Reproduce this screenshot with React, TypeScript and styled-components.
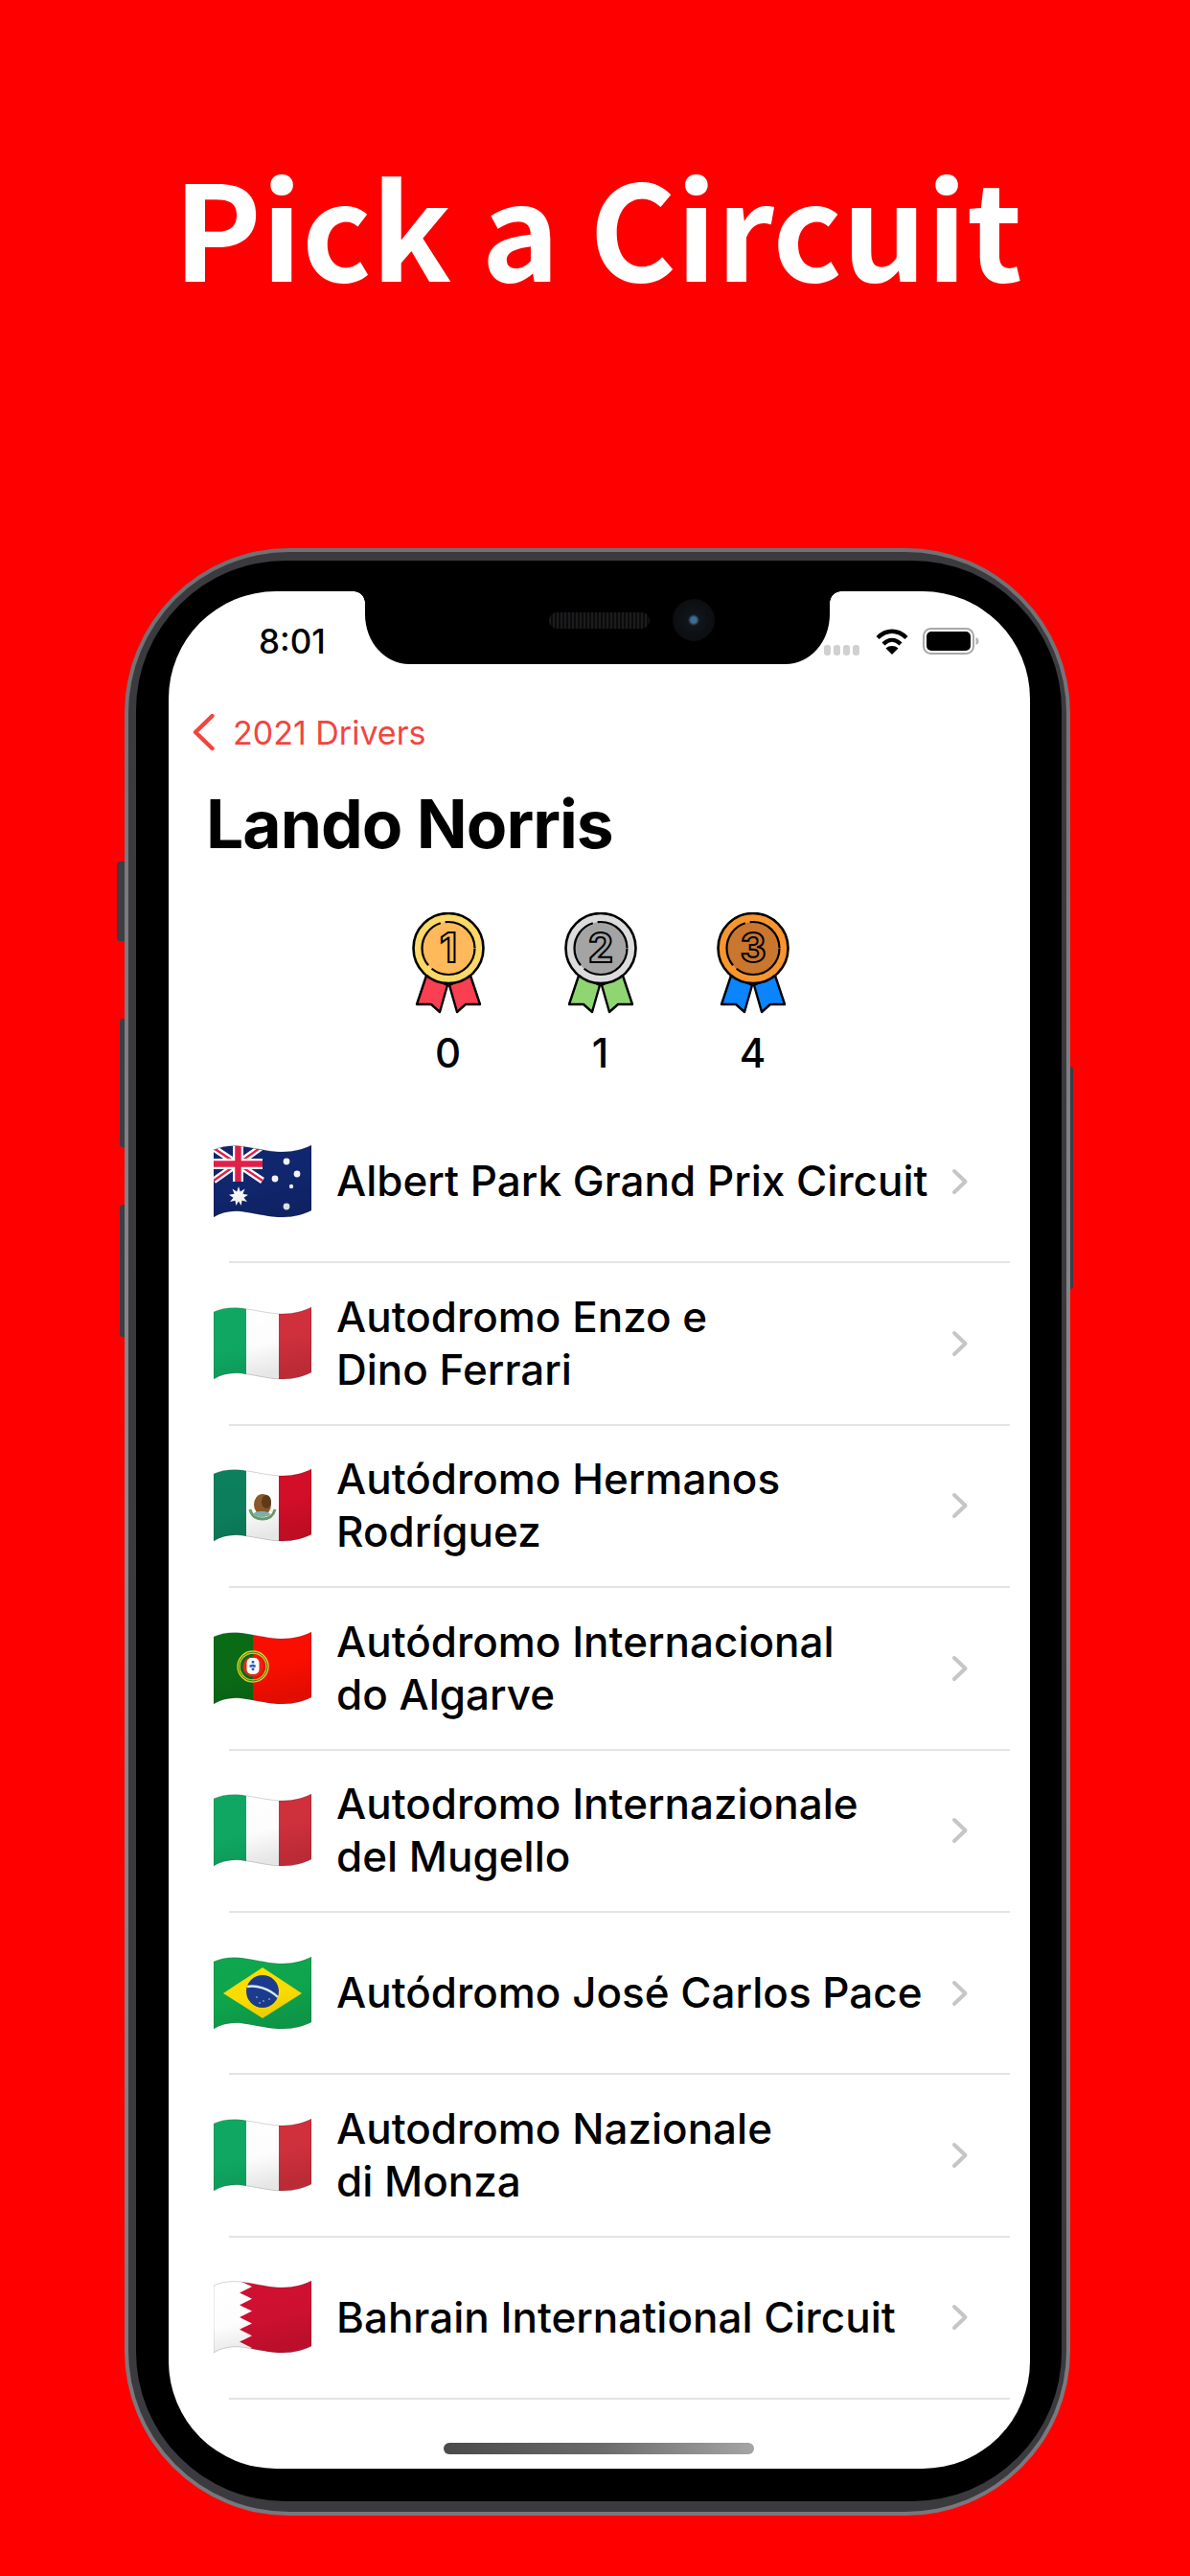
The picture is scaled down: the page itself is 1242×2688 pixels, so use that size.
import React from "react";
import styled, { createGlobalStyle } from "styled-components";

const Global = createGlobalStyle`
  html, body { margin: 0; padding: 0; background: #ff0000; }
  #root { width: 1242px; height: 2688px; overflow: hidden; }
`;

const Page = styled.div`
  width: 1242px;
  height: 2688px;
  background: #ff0000;
  display: flex;
  flex-direction: column;
  overflow: hidden;
  box-sizing: border-box;
`;

const Headline = styled.h1`
  margin: 0;
  height: 572px;
  padding: 134px 0 0 6px;
  box-sizing: border-box;
  text-align: center;
  color: #fff;
  font-family: "Noto Sans CJK JP", "Noto Sans", sans-serif;
  font-weight: 700;
  font-size: 138px;
  line-height: 200px;
`;

const Phone = styled.div`
  position: relative;
  margin-left: 130px;
  width: 987px;
  height: 2053px;
  box-sizing: border-box;
  padding: 4px;
  border-radius: 172px;
  background: linear-gradient(180deg, #707075, #8a8a8f 50%, #77777c);
`;

const Rim = styled.div`
  height: 100%;
  box-sizing: border-box;
  padding: 9px 5px 11px 8px;
  border-radius: 168px;
  background: #3a3a3f;
`;

const Bezel = styled.div`
  height: 100%;
  box-sizing: border-box;
  padding: 32px 33px 34px 34px;
  border-radius: 156px;
  background: #000;
`;

const SideButton = styled.span<{ $side: "left" | "right"; $top: number; $height: number; $width: number }>`
  position: absolute;
  top: ${(p) => p.$top}px;
  height: ${(p) => p.$height}px;
  width: ${(p) => p.$width}px;
  ${(p) => (p.$side === "left" ? `left: -${p.$width}px;` : `right: -${p.$width}px;`)}
  background: #3d3d43;
  border-radius: ${(p) => (p.$side === "left" ? "3px 0 0 3px" : "0 3px 3px 0")};
`;

const Screen = styled.div`
  position: relative;
  height: 100%;
  background: #fff;
  border-radius: 112px;
  overflow: hidden;
  display: flex;
  flex-direction: column;
  font-family: Inter, "Liberation Sans", sans-serif;
  color: #000;
`;

const Notch = styled.div`
  position: absolute;
  top: 0;
  left: 205px;
  width: 485px;
  height: 76px;
  background: #000;
  border-radius: 0 0 46px 46px / 0 0 52px 52px;
  &::before, &::after {
    content: "";
    position: absolute;
    top: 0;
    width: 12px;
    height: 12px;
  }
  &::before {
    left: -12px;
    background: radial-gradient(circle at 0 100%, transparent 11.5px, #000 12px);
  }
  &::after {
    right: -12px;
    background: radial-gradient(circle at 100% 100%, transparent 11.5px, #000 12px);
  }
`;

const Speaker = styled.span`
  position: absolute;
  left: 192px;
  top: 22px;
  width: 105px;
  height: 17px;
  border-radius: 9px;
  background: repeating-linear-gradient(90deg, #1c1c1e 0 2px, #0b0b0c 2px 4px);
`;

const Camera = styled.span`
  position: absolute;
  left: 321px;
  top: 8px;
  width: 44px;
  height: 44px;
  border-radius: 50%;
  background: radial-gradient(circle at 50% 50%, #3f6d8f 0 3px, #10161b 6px, #0c0d0f 70%);
`;

const StatusBar = styled.div`
  height: 70px;
  padding: 17px 52px 0 94px;
  display: flex;
  justify-content: space-between;
  align-items: center;
  flex-shrink: 0;
`;

const Clock = styled.span`
  font-size: 35px;
  font-weight: 500;
  line-height: 50px;
`;

const StatusIcons = styled.div`
  display: flex;
  align-items: center;
`;

const SignalDots = styled.div`
  display: flex;
  gap: 3px;
  margin-right: 17px;
  margin-top: 18px;
`;

const SignalDot = styled.span`
  width: 7px;
  height: 11px;
  border-radius: 3px;
  background: #d0d0d2;
`;

const BatteryIcon = styled.svg`
  margin-left: 15px;
`;

const BackRow = styled.div`
  display: flex;
  align-items: center;
  gap: 18px;
  margin-top: 38px;
  padding-left: 24px;
  height: 44px;
  color: #f2453f;
  font-size: 34px;
  flex-shrink: 0;
`;

const Name = styled.h2`
  margin: 33px 0 0 39px;
  font-size: 69.5px;
  line-height: 82px;
  font-weight: 700;
  letter-spacing: -1px;
`;

const MedalRow = styled.div`
  margin-top: 51px;
  display: flex;
  justify-content: center;
  gap: 79px;
  padding-left: 2px;
`;

const MedalCell = styled.div`
  width: 80px;
  display: flex;
  flex-direction: column;
  align-items: center;
`;

const MedalIcon = styled.svg`
  display: block;
  width: 80px;
  height: 108px;
`;

const MedalCount = styled.span`
  margin-top: 14px;
  font-size: 42px;
  line-height: 50px;
  font-weight: 500;
`;

const List = styled.div`
  margin-top: 25px;
  display: flex;
  flex-direction: column;
`;

const Row = styled.div`
  height: 167.4px;
  box-sizing: border-box;
  display: flex;
  align-items: center;
  padding: 0 63px 0 47px;
`;

const FlagIcon = styled.svg`
  display: block;
  width: 102px;
  height: 76px;
  flex-shrink: 0;
`;

const RowName = styled.span`
  flex: 1;
  margin-left: 26px;
  font-size: 44px;
  line-height: 55px;
  font-weight: 500;
`;

const Separator = styled.div`
  height: 2px;
  margin: 0 21px 0 63px;
  background: #e4e4e6;
`;

const HomeBar = styled.div`
  position: absolute;
  left: 287px;
  bottom: 15px;
  width: 324px;
  height: 12px;
  border-radius: 6px;
  background: linear-gradient(90deg, #4a4a4a, #6a6a6a 50%, #a5a5a5);
`;

const WAVE = "M0 5C8 1 18 0 28 1C45 3 58 7 72 7C84 7 94 4 102 0V68C94 72 84 75 72 75C58 75 45 71 28 69C18 68 8 70 0 75Z";

const STAR_AU: [number, number, number][] = [
  [76, 17, 3.4],
  [87, 30, 3.4],
  [64, 35, 3.4],
  [81, 43, 2.2],
  [76, 64, 3.4],
];

const flagBodies: Record<string, React.ReactNode> = {
  au: (
    <>
      <rect width="102" height="76" fill="#10266e" />
      <g>
        <polygon points="0,4 51,4 51,37 0,37" fill="#10266e" />
        <path d="M0 3L51 37M51 1L0 37" stroke="#fff" strokeWidth="7" />
        <path d="M0 3L51 37M51 1L0 37" stroke="#e0204a" strokeWidth="2.4" />
        <path d="M25.5 0V38M0 19.5H51" stroke="#fff" strokeWidth="11" />
        <path d="M25.5 0V38M0 19.5H51" stroke="#e0204a" strokeWidth="6.5" />
      </g>
      {STAR_AU.map(([x, y, r]) => (
        <circle key={x + "-" + y} cx={x} cy={y} r={r} fill="#f4f6fb" />
      ))}
      <polygon
        points="26,43 27.8,48.5 32.5,45.5 30.5,50.8 36,51.8 31.5,54.8 35,59 29.6,57.8 28.6,63 26,58.6 23.4,63 22.4,57.8 17,59 20.5,54.8 16,51.8 21.5,50.8 19.5,45.5 24.2,48.5"
        fill="#fff"
      />
    </>
  ),
  it: (
    <>
      <rect width="34" height="76" fill="#0fa862" />
      <rect x="34" width="34" height="76" fill="#fff" />
      <rect x="68" width="34" height="76" fill="#d0303c" />
    </>
  ),
  mx: (
    <>
      <rect width="34" height="76" fill="#0c7f5c" />
      <rect x="34" width="34" height="76" fill="#fff" />
      <rect x="68" width="34" height="76" fill="#d40e28" />
      <path d="M38 42C40 51 46 52 51 52C57 52 62 50 64 42" fill="none" stroke="#6f9f6a" strokeWidth="3" />
      <ellipse cx="51" cy="37" rx="9" ry="11" fill="#8a5a2b" />
      <ellipse cx="55" cy="34" rx="5" ry="7" fill="#5e3b1a" />
      <ellipse cx="50" cy="47" rx="9" ry="3" fill="#7fb7b0" />
    </>
  ),
  pt: (
    <>
      <rect width="41" height="76" fill="#0a6b16" />
      <rect x="41" width="61" height="76" fill="#fb0e00" />
      <circle cx="41" cy="36" r="15" fill="none" stroke="#e3d21f" strokeWidth="3.4" />
      <circle cx="41" cy="36" r="15" fill="none" stroke="#2f7f1e" strokeWidth="1" />
      <circle cx="41" cy="36" r="10.5" fill="#e22a1c" />
      <rect x="34.5" y="27" width="13" height="17" rx="5" fill="#fff" />
      <path d="M41 30V41M37.5 35.5H44.5" stroke="#2b57b8" strokeWidth="2.6" strokeDasharray="2.4 1.4" />
    </>
  ),
  br: (
    <>
      <rect width="102" height="76" fill="#0ea64e" />
      <polygon points="10,38 51,11 92,38 51,64" fill="#fede00" />
      <circle cx="51" cy="36" r="17" fill="#1b3c8f" />
      <path d="M35 31C44 29 58 33 67 42" fill="none" stroke="#dfe9f2" strokeWidth="2.4" />
      <circle cx="45" cy="42" r="0.8" fill="#cfd9ee" />
      <circle cx="52" cy="46" r="0.8" fill="#cfd9ee" />
      <circle cx="58" cy="44" r="0.8" fill="#cfd9ee" />
      <circle cx="48" cy="48" r="0.8" fill="#cfd9ee" />
    </>
  ),
  bh: (
    <>
      <rect width="102" height="76" fill="#fff" />
      <polygon
        points="27,0 40,6 27,12.4 40,18.8 27,25.2 40,31.6 27,38 40,44.4 27,50.8 40,57.2 27,63.6 40,70 27,76 102,76 102,0"
        fill="#d01030"
      />
    </>
  ),
};

type FlagProps = { code: string; uid: string };

const Flag = ({ code, uid }: FlagProps) => (
  <FlagIcon viewBox="0 0 102 76" aria-hidden>
    <defs>
      <clipPath id={"clip-" + uid}>
        <path d={WAVE} />
      </clipPath>
      <linearGradient id={"shade-" + uid} x1="0" y1="0" x2="0.3" y2="1">
        <stop offset="0" stopColor="#000" stopOpacity="0" />
        <stop offset="0.6" stopColor="#000" stopOpacity="0.01" />
        <stop offset="1" stopColor="#000" stopOpacity="0.1" />
      </linearGradient>
    </defs>
    <g clipPath={`url(#clip-${uid})`}>
      {flagBodies[code]}
      <rect width="102" height="76" fill={`url(#shade-${uid})`} />
    </g>
    <path d={WAVE} fill="none" stroke="#000" strokeOpacity="0.17" strokeWidth="1" />
  </FlagIcon>
);

type MedalProps = { digit: string; ring: string; face: string; ribbon: string };

const Medal = ({ digit, ring, face, ribbon }: MedalProps) => (
  <MedalIcon viewBox="0 0 80 108" aria-hidden>
    <g fill={ribbon} stroke="#000" strokeWidth="2.4" strokeLinejoin="round">
      <polygon points="17,66 39,76 31,104 22,96 7,96" />
      <polygon points="63,66 41,76 49,104 58,96 73,96" />
    </g>
    <circle cx="40" cy="37.5" r="36.5" fill={ring} stroke="#000" strokeWidth="2.6" />
    <circle cx="40" cy="37.5" r="27.5" fill={face} stroke="#000" strokeWidth="2.2" strokeDasharray="62 5 54 5 46 3" />
    <text
      x="40"
      y="52"
      textAnchor="middle"
      fontFamily="Inter, sans-serif"
      fontSize="42"
      fontWeight="700"
      fill={face}
      stroke="#000"
      strokeWidth="2"
    >
      {digit}
    </text>
  </MedalIcon>
);

const medals: (MedalProps & { count: number })[] = [
  { digit: "1", ring: "#fcd868", face: "#fdb95a", ribbon: "#fb3f52", count: 0 },
  { digit: "2", ring: "#dcdcdc", face: "#a4a4a4", ribbon: "#8fd673", count: 1 },
  { digit: "3", ring: "#f8952f", face: "#c9762f", ribbon: "#0a84ff", count: 4 },
];

const circuits: { code: string; lines: string[] }[] = [
  { code: "au", lines: ["Albert Park Grand Prix Circuit"] },
  { code: "it", lines: ["Autodromo Enzo e", "Dino Ferrari"] },
  { code: "mx", lines: ["Autódromo Hermanos", "Rodríguez"] },
  { code: "pt", lines: ["Autódromo Internacional", "do Algarve"] },
  { code: "it", lines: ["Autodromo Internazionale", "del Mugello"] },
  { code: "br", lines: ["Autódromo José Carlos Pace"] },
  { code: "it", lines: ["Autodromo Nazionale", "di Monza"] },
  { code: "bh", lines: ["Bahrain International Circuit"] },
];

export default function App() {
  return (
    <Page>
      <Global />
      <Headline>Pick a Circuit</Headline>
      <Phone>
        <SideButton $side="left" $top={327} $height={83} $width={8} />
        <SideButton $side="left" $top={491} $height={134} $width={5} />
        <SideButton $side="left" $top={685} $height={138} $width={5} />
        <SideButton $side="right" $top={541} $height={232} $width={3} />
        <Rim>
          <Bezel>
            <Screen>
              <Notch>
                <Speaker />
                <Camera />
              </Notch>
              <StatusBar>
                <Clock>8:01</Clock>
                <StatusIcons>
                  <SignalDots>
                    <SignalDot />
                    <SignalDot />
                    <SignalDot />
                    <SignalDot />
                  </SignalDots>
                  <svg width="34" height="28" viewBox="0 0 34 28" aria-hidden>
                    <path d="M2 10.5C11 1.5 23 1.5 32 10.5" fill="none" stroke="#000" strokeWidth="4.4" />
                    <path d="M8 17C13.5 11.5 20.5 11.5 26 17" fill="none" stroke="#000" strokeWidth="4.4" />
                    <path d="M17 28L10.5 21.5C14 18.2 20 18.2 23.5 21.5Z" fill="#000" />
                  </svg>
                  <BatteryIcon width="60" height="28" viewBox="0 0 60 28" aria-hidden>
                    <rect x="1" y="1" width="52" height="26" rx="7.5" fill="none" stroke="#a9a9ab" strokeWidth="2" />
                    <rect x="4" y="4" width="46" height="20" rx="5" fill="#000" />
                    <path d="M55.5 10C58 10.8 58.5 12.5 58.5 14C58.5 15.5 58 17.2 55.5 18Z" fill="#b5b5b7" />
                  </BatteryIcon>
                </StatusIcons>
              </StatusBar>
              <BackRow>
                <svg width="25" height="40" viewBox="0 0 25 40" aria-hidden>
                  <path d="M21.5 3L4 20L21.5 37" fill="none" stroke="#f2453f" strokeWidth="4.4" strokeLinecap="round" strokeLinejoin="round" />
                </svg>
                <span>2021 Drivers</span>
              </BackRow>
              <Name>Lando Norris</Name>
              <MedalRow>
                {medals.map((m) => (
                  <MedalCell key={m.digit}>
                    <Medal digit={m.digit} ring={m.ring} face={m.face} ribbon={m.ribbon} />
                    <MedalCount>{m.count}</MedalCount>
                  </MedalCell>
                ))}
              </MedalRow>
              <List>
                {circuits.map((c, i) => (
                  <React.Fragment key={c.lines[0]}>
                    <Row>
                      <Flag code={c.code} uid={c.code + i} />
                      <RowName>
                        {c.lines.map((l, j) => (
                          <React.Fragment key={l}>
                            {j > 0 && <br />}
                            {l}
                          </React.Fragment>
                        ))}
                      </RowName>
                      <svg width="20" height="30" viewBox="0 0 20 30" aria-hidden>
                        <path d="M4 4L15.5 15L4 26" fill="none" stroke="#c6c6c8" strokeWidth="4" strokeLinecap="round" strokeLinejoin="round" />
                      </svg>
                    </Row>
                    <Separator />
                  </React.Fragment>
                ))}
              </List>
              <HomeBar />
            </Screen>
          </Bezel>
        </Rim>
      </Phone>
    </Page>
  );
}
